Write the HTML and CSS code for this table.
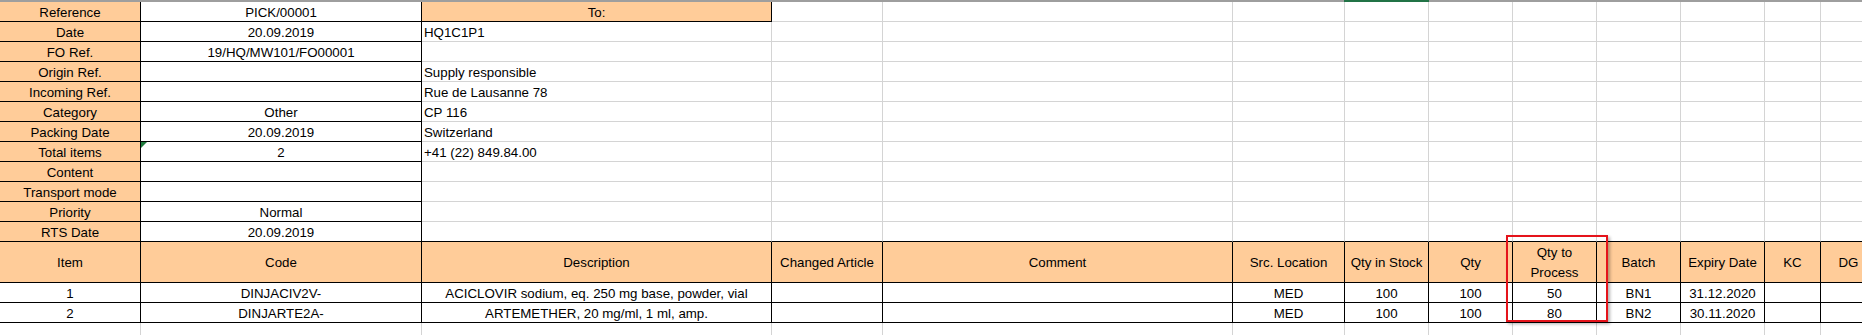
FILE: index.html
```html
<!DOCTYPE html>
<html>
<head>
<meta charset="utf-8">
<title>Picking sheet</title>
<link rel="stylesheet" href="styles.css">
</head>
<body>
<div class="sheet">
  <div class="colhead">
    <div></div><div></div><div></div><div></div><div></div><div></div>
    <div class="sel"></div>
    <div></div><div></div><div></div><div></div><div></div><div></div>
  </div>
  <div class="grid">
    <!-- row 1 -->
    <div class="c hd">Reference</div><div class="c bd">PICK/00001</div><div class="c hd">To:</div>
    <div class="c"></div><div class="c"></div><div class="c"></div><div class="c"></div><div class="c"></div><div class="c"></div><div class="c"></div><div class="c"></div><div class="c"></div><div class="c"></div>
    <!-- row 2 -->
    <div class="c hd">Date</div><div class="c bd">20.09.2019</div><div class="c l">HQ1C1P1</div>
    <div class="c"></div><div class="c"></div><div class="c"></div><div class="c"></div><div class="c"></div><div class="c"></div><div class="c"></div><div class="c"></div><div class="c"></div><div class="c"></div>
    <!-- row 3 -->
    <div class="c hd">FO Ref.</div><div class="c bd">19/HQ/MW101/FO00001</div><div class="c l"></div>
    <div class="c"></div><div class="c"></div><div class="c"></div><div class="c"></div><div class="c"></div><div class="c"></div><div class="c"></div><div class="c"></div><div class="c"></div><div class="c"></div>
    <!-- row 4 -->
    <div class="c hd">Origin Ref.</div><div class="c bd"></div><div class="c l">Supply responsible</div>
    <div class="c"></div><div class="c"></div><div class="c"></div><div class="c"></div><div class="c"></div><div class="c"></div><div class="c"></div><div class="c"></div><div class="c"></div><div class="c"></div>
    <!-- row 5 -->
    <div class="c hd">Incoming Ref.</div><div class="c bd"></div><div class="c l">Rue de Lausanne 78</div>
    <div class="c"></div><div class="c"></div><div class="c"></div><div class="c"></div><div class="c"></div><div class="c"></div><div class="c"></div><div class="c"></div><div class="c"></div><div class="c"></div>
    <!-- row 6 -->
    <div class="c hd">Category</div><div class="c bd">Other</div><div class="c l">CP 116</div>
    <div class="c"></div><div class="c"></div><div class="c"></div><div class="c"></div><div class="c"></div><div class="c"></div><div class="c"></div><div class="c"></div><div class="c"></div><div class="c"></div>
    <!-- row 7 -->
    <div class="c hd">Packing Date</div><div class="c bd">20.09.2019</div><div class="c l">Switzerland</div>
    <div class="c"></div><div class="c"></div><div class="c"></div><div class="c"></div><div class="c"></div><div class="c"></div><div class="c"></div><div class="c"></div><div class="c"></div><div class="c"></div>
    <!-- row 8 -->
    <div class="c hd">Total items</div><div class="c bd flag">2</div><div class="c l">+41 (22) 849.84.00</div>
    <div class="c"></div><div class="c"></div><div class="c"></div><div class="c"></div><div class="c"></div><div class="c"></div><div class="c"></div><div class="c"></div><div class="c"></div><div class="c"></div>
    <!-- row 9 -->
    <div class="c hd">Content</div><div class="c bd"></div><div class="c l"></div>
    <div class="c"></div><div class="c"></div><div class="c"></div><div class="c"></div><div class="c"></div><div class="c"></div><div class="c"></div><div class="c"></div><div class="c"></div><div class="c"></div>
    <!-- row 10 -->
    <div class="c hd">Transport mode</div><div class="c bd"></div><div class="c l"></div>
    <div class="c"></div><div class="c"></div><div class="c"></div><div class="c"></div><div class="c"></div><div class="c"></div><div class="c"></div><div class="c"></div><div class="c"></div><div class="c"></div>
    <!-- row 11 -->
    <div class="c hd">Priority</div><div class="c bd">Normal</div><div class="c l"></div>
    <div class="c"></div><div class="c"></div><div class="c"></div><div class="c"></div><div class="c"></div><div class="c"></div><div class="c"></div><div class="c"></div><div class="c"></div><div class="c"></div>
    <!-- row 12 -->
    <div class="c hd">RTS Date</div><div class="c bd">20.09.2019</div><div class="c bb"></div>
    <div class="c bb"></div><div class="c bb"></div><div class="c bb"></div><div class="c bb"></div><div class="c bb"></div><div class="c bb"></div><div class="c bb"></div><div class="c bb"></div><div class="c bb"></div><div class="c bb"></div>
    <!-- table header -->
    <div class="c hd th">Item</div><div class="c hd th">Code</div><div class="c hd th">Description</div><div class="c hd th">Changed Article</div><div class="c hd th">Comment</div><div class="c hd th">Src. Location</div><div class="c hd th">Qty in Stock</div><div class="c hd th">Qty</div><div class="c hd th">Qty to<br>Process</div><div class="c hd th">Batch</div><div class="c hd th">Expiry Date</div><div class="c hd th">KC</div><div class="c hd th">DG</div>
    <!-- data rows -->
    <div class="c bd">1</div><div class="c bd">DINJACIV2V-</div><div class="c bd">ACICLOVIR sodium, eq. 250 mg base, powder, vial</div><div class="c bd"></div><div class="c bd"></div><div class="c bd">MED</div><div class="c bd">100</div><div class="c bd">100</div><div class="c bd">50</div><div class="c bd">BN1</div><div class="c bd">31.12.2020</div><div class="c bd"></div><div class="c bd"></div>
    <div class="c bd">2</div><div class="c bd">DINJARTE2A-</div><div class="c bd">ARTEMETHER, 20 mg/ml, 1 ml, amp.</div><div class="c bd"></div><div class="c bd"></div><div class="c bd">MED</div><div class="c bd">100</div><div class="c bd">100</div><div class="c bd">80</div><div class="c bd">BN2</div><div class="c bd">30.11.2020</div><div class="c bd"></div><div class="c bd"></div>
    <!-- empty row -->
    <div class="c"></div><div class="c"></div><div class="c"></div><div class="c"></div><div class="c"></div><div class="c"></div><div class="c"></div><div class="c"></div><div class="c"></div><div class="c"></div><div class="c"></div><div class="c"></div><div class="c"></div>
  </div>
  <div class="highlight"></div>
</div>
</body>
</html>
```

FILE: styles.css
```css
* { box-sizing: border-box; }

html, body {
  margin: 0;
  padding: 0;
  background: #ffffff;
  overflow: hidden;
}

.sheet {
  position: relative;
  width: 1877px;
  font-family: "Liberation Sans", Arial, sans-serif;
  font-size: 13.3px;
  color: #000000;
}

.colhead {
  display: grid;
  grid-template-columns: 141px 281px 350px 111px 350px 112px 84px 84px 84px 84px 84px 56px 56px;
  height: 2px;
  background: #9e9e9e;
}

.colhead .sel {
  background: #217346;
  margin-left: -1px;
}

.grid {
  display: grid;
  grid-template-columns: 141px 281px 350px 111px 350px 112px 84px 84px 84px 84px 84px 56px 56px;
  grid-template-rows: repeat(12, 20px) 41px 20px 20px 20px;
}

.c {
  position: relative;
  display: flex;
  align-items: center;
  justify-content: center;
  text-align: center;
  padding-top: 2px;
  line-height: 17px;
  white-space: nowrap;
  overflow: hidden;
  border-right: 1px solid #d4d4d4;
  border-bottom: 1px solid #d4d4d4;
}

.c.l {
  justify-content: flex-start;
  text-align: left;
  padding-left: 2px;
}

.c.hd {
  background: #ffcc99;
  border-right-color: #000000;
  border-bottom-color: #000000;
}

.c.bd {
  border-right-color: #000000;
  border-bottom-color: #000000;
}

.c.bb {
  border-bottom-color: #000000;
}

.c.th {
  line-height: 20px;
}

.c.flag::before {
  content: "";
  position: absolute;
  top: 0;
  left: 0;
  border-top: 6px solid #1e7a3c;
  border-right: 6px solid transparent;
}

.highlight {
  position: absolute;
  left: 1506px;
  top: 235px;
  width: 102px;
  height: 87px;
  border: 2px solid #e5131b;
  box-shadow: 2px 2px 3px rgba(0, 0, 0, 0.3);
  pointer-events: none;
}
```
